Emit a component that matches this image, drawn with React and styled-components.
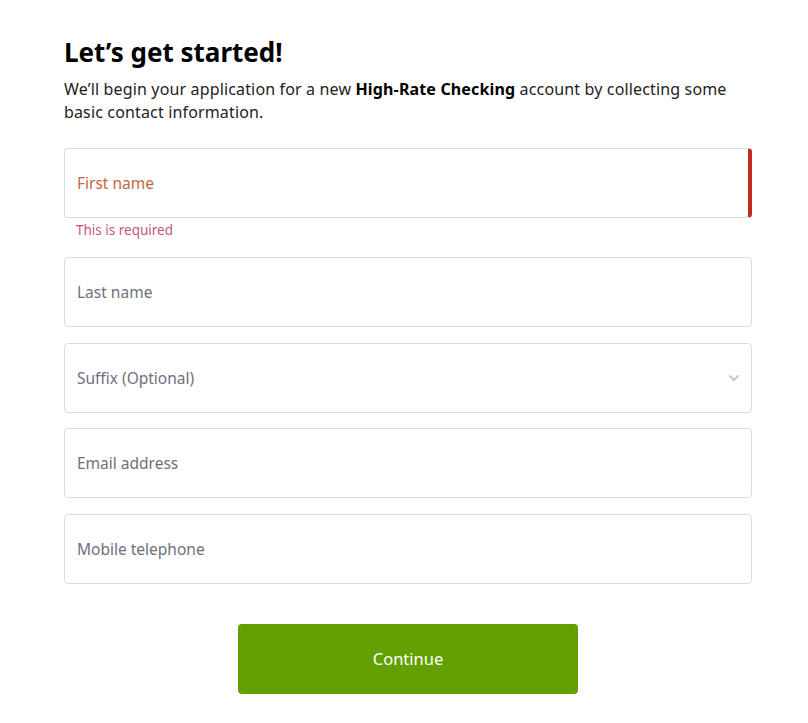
import React from 'react';
import styled, { createGlobalStyle } from 'styled-components';

const GlobalStyle = createGlobalStyle`
  body {
    margin: 0;
    background: #fff;
    font-family: "Noto Sans", "Liberation Sans", sans-serif;
  }
`;

const Page = styled.div`
  width: 688px;
  padding: 34px 0 30px 64px;
`;

const Title = styled.h1`
  margin: 0;
  font-size: 26px;
  line-height: 36px;
  font-weight: 700;
  color: #000;
`;

const Intro = styled.p`
  margin: 8px 0 24px;
  font-size: 16px;
  line-height: 23px;
  letter-spacing: 0.15px;
  color: #222;

  strong {
    font-weight: 700;
    color: #000;
  }
`;

const Form = styled.div`
  display: flex;
  flex-direction: column;
  gap: 15.5px;
`;

const Field = styled.div`
  display: flex;
  flex-direction: column;
`;

const InputBox = styled.div`
  height: 68px;
  border: 1px solid #dcdcdc;
  border-right: ${(p) => (p.$error ? '4px solid #c32a1e' : '1px solid #dcdcdc')};
  border-radius: 4px;
  display: flex;
  align-items: center;
  justify-content: space-between;
  padding: 0 12px;
`;

const Placeholder = styled.span`
  font-size: 15.5px;
  color: ${(p) => (p.$error ? '#c4683f' : '#6f6f7e')};
`;

const ErrorText = styled.div`
  margin: 3px 0 2.5px 12px;
  font-size: 13.5px;
  line-height: 18px;
  color: #c5567a;
`;

const Chevron = styled.svg`
  width: 14px;
  height: 14px;
  margin-right: -2px;
`;

const Actions = styled.div`
  display: flex;
  justify-content: center;
  margin-top: 40px;
`;

const Button = styled.button`
  width: 340px;
  height: 70px;
  border: none;
  border-radius: 4px;
  background: #639f00;
  color: #fff;
  font-family: inherit;
  font-size: 16.5px;
  cursor: pointer;
`;

const Input = ({ label, error, select }) => (
  <InputBox $error={error}>
    <Placeholder $error={error}>{label}</Placeholder>
    {select && (
      <Chevron viewBox="0 0 14 14" fill="none" stroke="#c8c8c8" strokeWidth="2" strokeLinecap="round">
        <path d="M3 5l4 4 4-4" />
      </Chevron>
    )}
  </InputBox>
);

const App = () => (
  <>
    <GlobalStyle />
    <Page>
      <Title>Let’s get started!</Title>
      <Intro>
        We’ll begin your application for a new <strong>High-Rate Checking</strong> account by collecting some
        basic contact information.
      </Intro>
      <Form>
        <Field>
          <Input label="First name" error />
          <ErrorText>This is required</ErrorText>
        </Field>
        <Input label="Last name" />
        <Input label="Suffix (Optional)" select />
        <Input label="Email address" />
        <Input label="Mobile telephone" />
      </Form>
      <Actions>
        <Button>Continue</Button>
      </Actions>
    </Page>
  </>
);

export default App;
